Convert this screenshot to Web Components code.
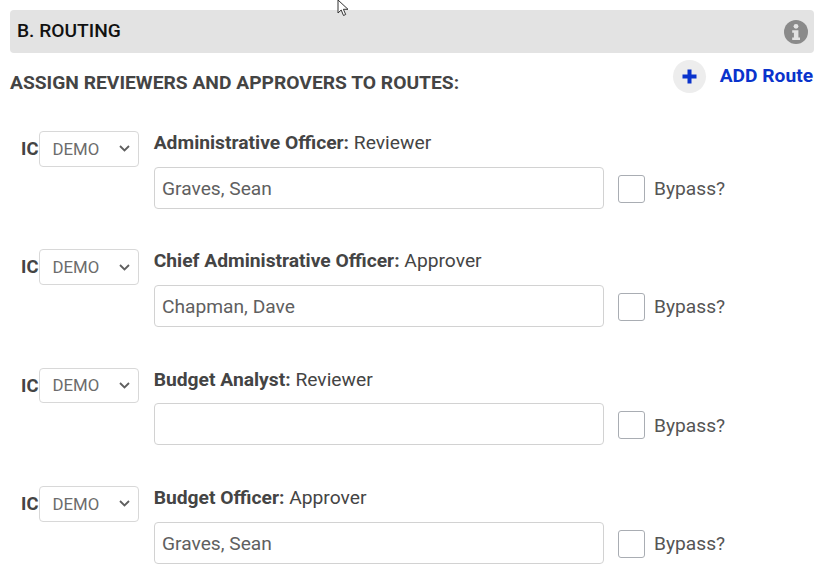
<!DOCTYPE html>
<html>
<head>
<meta charset="utf-8">
<title>Routing</title>
<style>
  html, body { margin: 0; background: #fff; }
  body { font-family: Roboto, "Liberation Sans", sans-serif; color: #444; width: 826px; height: 586px; overflow: hidden; }
</style>
</head>
<body>
<routing-panel title="B. ROUTING">
  <route-row role-name="Administrative Officer:" role-type="Reviewer" value="Graves, Sean"></route-row>
  <route-row role-name="Chief Administrative Officer:" role-type="Approver" value="Chapman, Dave"></route-row>
  <route-row role-name="Budget Analyst:" role-type="Reviewer" value=""></route-row>
  <route-row role-name="Budget Officer:" role-type="Approver" value="Graves, Sean"></route-row>
</routing-panel>

<script>
class RoutingPanel extends HTMLElement {
  constructor() {
    super();
    const template = document.createElement('template');
    template.innerHTML = `
      <style>
        :host {
          display: block;
          position: relative;
          padding: 10px 12px 0 10px;
        }

        .header {
          display: flex;
          align-items: center;
          justify-content: space-between;
          height: 43px;
          padding: 0 7px;
          background-color: #e3e3e3;
          border-radius: 4px;
          font-size: 19.2px;
          font-weight: 500;
          color: #111;
        }

        #title {
          margin-bottom: 2px;
        }

        .info {
          width: 24px;
          height: 24px;
          margin-right: -1px;
        }

        .sub {
          display: flex;
          justify-content: space-between;
          height: 78px;
        }

        .sub h2 {
          margin: 18px 0 0;
          font-size: 19.24px;
          line-height: 24px;
          font-weight: 700;
          color: #444;
        }

        .add {
          display: flex;
          align-items: center;
          gap: 14px;
          height: 34px;
          margin: 6px 1px 0 0;
          color: #0a33cc;
          font-size: 19.2px;
          font-weight: 700;
        }

        .add .label {
          margin-bottom: 2px;
        }

        .add .circle {
          display: flex;
          align-items: center;
          justify-content: center;
          width: 33px;
          height: 33px;
          border-radius: 50%;
          background-color: #ededed;
        }

        .cursor {
          position: absolute;
          left: 337px;
          top: -1px;
        }
      </style>
      <div class="header">
        <span id="title"></span>
        <svg class="info" viewBox="0 0 24 24">
          <circle cx="12" cy="12" r="12" fill="#8a8a8a"/>
          <circle cx="12" cy="6.3" r="2.4" fill="#e3e3e3"/>
          <path d="M8.2 10.2h6.2v7.2h1.6v2.6H8.2v-2.6h1.7v-4.6H8.2z" fill="#e3e3e3"/>
        </svg>
      </div>
      <div class="sub">
        <h2>ASSIGN REVIEWERS AND APPROVERS TO ROUTES:</h2>
        <div class="add">
          <span class="circle">
            <svg width="15" height="15" viewBox="0 0 15 15"><path d="M5.5 0.5h4v5h5v4h-5v5h-4v-5h-5v-4h5z" fill="#0a33cc"/></svg>
          </span>
          <span class="label">ADD Route</span>
        </div>
      </div>
      <slot></slot>
      <svg class="cursor" width="14" height="18" viewBox="0 0 14 18">
        <path d="M1 1v13l3.2-3 2.3 5.5 2.2-1-2.3-5.2H11z" fill="#fff" stroke="#333" stroke-width="1"/>
      </svg>
    `;
    this.document = this.attachShadow({ mode: 'open' });
    this.document.appendChild(template.content.cloneNode(true));
  }

  connectedCallback() {
    this.document.getElementById('title').textContent = this.getAttribute('title');
    this.removeAttribute('title');
  }
}

class RouteRow extends HTMLElement {
  constructor() {
    super();
    const template = document.createElement('template');
    template.innerHTML = `
      <style>
        :host {
          display: flex;
          height: 118.33px;
          padding-left: 11px;
          box-sizing: border-box;
        }

        .ic {
          width: 18px;
          font-size: 18.4px;
          font-weight: 700;
          line-height: 35.4px;
          color: #444;
        }

        .body {
          margin-left: 14.7px;
          flex: none;
          width: 450px;
        }

        .label {
          height: 35.6px;
          font-size: 19.25px;
          line-height: 24px;
          color: #444;
        }

        .label b {
          font-weight: 700;
        }

        .field {
          display: flex;
          align-items: center;
          gap: 14px;
          width: 660px;
          margin-left: 0.3px;
        }

        .field input[type=text] {
          box-sizing: border-box;
          width: 450px;
          height: 42px;
          padding: 1px 7px 0;
          border: 1px solid #d2d2d2;
          border-radius: 4px;
          outline: none;
          background: #fff;
          font: 19.2px Roboto, "Liberation Sans", sans-serif;
          color: #606060;
        }

        .check {
          box-sizing: border-box;
          width: 27px;
          height: 28px;
          margin-top: 2px;
          border: 1px solid #a9adb3;
          border-radius: 3px;
          background: #fff;
        }

        .bypass {
          margin: 2px 0 0 -5px;
          font-size: 19.2px;
          color: #555;
        }
      </style>
      <span class="ic">IC</span>
      <demo-select></demo-select>
      <div class="body">
        <div class="label"><b id="name"></b> <span id="type"></span></div>
        <div class="field">
          <input type="text" id="value">
          <span class="check"></span>
          <span class="bypass">Bypass?</span>
        </div>
      </div>
    `;
    this.document = this.attachShadow({ mode: 'open' });
    this.document.appendChild(template.content.cloneNode(true));
  }

  connectedCallback() {
    this.document.getElementById('name').textContent = this.getAttribute('role-name');
    this.document.getElementById('type').textContent = this.getAttribute('role-type');
    this.document.getElementById('value').setAttribute('value', this.getAttribute('value') || '');
  }
}

class DemoSelect extends HTMLElement {
  constructor() {
    super();
    const template = document.createElement('template');
    template.innerHTML = `
      <style>
        :host {
          display: flex;
          flex: none;
          align-items: center;
          justify-content: space-between;
          box-sizing: border-box;
          width: 100px;
          height: 35.6px;
          padding: 0 8px 0 12.5px;
          border: 1px solid #d8d8d8;
          border-radius: 4px;
          font-size: 16.8px;
          color: #6c6c6c;
        }
      </style>
      <span>DEMO</span>
      <svg width="11" height="7" viewBox="0 0 11 7"><path d="M1 1l4.5 4.5L10 1" fill="none" stroke="#5f5f5f" stroke-width="1.8"/></svg>
    `;
    this.document = this.attachShadow({ mode: 'open' });
    this.document.appendChild(template.content.cloneNode(true));
  }
}

window.customElements.define('routing-panel', RoutingPanel);
window.customElements.define('route-row', RouteRow);
window.customElements.define('demo-select', DemoSelect);
</script>
</body>
</html>
